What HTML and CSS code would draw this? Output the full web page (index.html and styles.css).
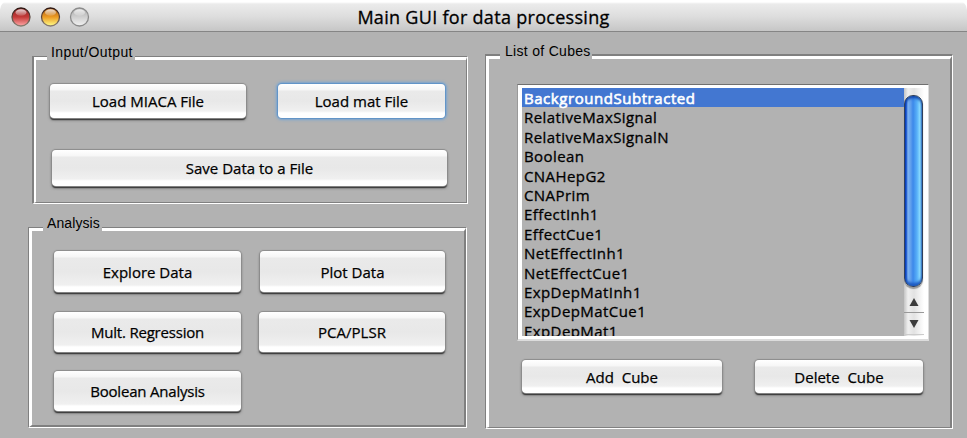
FILE: index.html
```html
<!DOCTYPE html>
<html lang="en">
<head>
<meta charset="utf-8">
<title>Main GUI for data processing</title>
<link rel="stylesheet" href="styles.css">
</head>
<body>
<div class="window">
  <header class="titlebar">
    <svg class="lights" width="90" height="22" viewBox="0 0 90 22">
      <defs>
        <linearGradient id="red" x2="0" y2="1"><stop offset="0" stop-color="#8d2525"/><stop offset=".5" stop-color="#c43a38"/><stop offset="1" stop-color="#ffa8a8"/></linearGradient>
        <linearGradient id="amber" x2="0" y2="1"><stop offset="0" stop-color="#a85a16"/><stop offset=".5" stop-color="#eb9a22"/><stop offset="1" stop-color="#ffff8c"/></linearGradient>
        <linearGradient id="clear" x2="0" y2="1"><stop offset="0" stop-color="#aaa"/><stop offset=".5" stop-color="#cfcfcf"/><stop offset="1" stop-color="#f2f2f2"/></linearGradient>
        <linearGradient id="rim" x2="0" y2="1"><stop offset="0" stop-color="#2c1510"/><stop offset="1" stop-color="#8a7d70"/></linearGradient>
        <linearGradient id="gloss" x2="0" y2="1"><stop offset="0" stop-color="#fff" stop-opacity=".8"/><stop offset="1" stop-color="#fff" stop-opacity=".15"/></linearGradient>
      </defs>
      <g stroke-width="1.3">
        <circle cx="21" cy="11" r="9" fill="url(#red)" stroke="url(#rim)"/>
        <circle cx="50.5" cy="11" r="9" fill="url(#amber)" stroke="url(#rim)"/>
        <circle cx="79.5" cy="11" r="9" fill="url(#clear)" stroke="#8b8b8b"/>
      </g>
      <g fill="url(#gloss)">
        <ellipse cx="21" cy="6.5" rx="5.5" ry="3.2"/>
        <ellipse cx="50.5" cy="6.5" rx="5.5" ry="3.2"/>
        <ellipse cx="79.5" cy="6.5" rx="5.5" ry="3.2"/>
      </g>
    </svg>
    <h1 class="title">Main GUI for data processing</h1>
  </header>
  <main class="content">
    <div class="left">
      <section class="panel io">
        <h2 class="legend">Input/Output</h2>
        <div class="inner io-inner">
          <div class="row">
            <button class="btn load-miaca"><span>Load MIACA File</span></button>
            <button class="btn load-mat focus"><span>Load mat File</span></button>
          </div>
          <button class="btn save"><span>Save Data to a File</span></button>
        </div>
      </section>
      <section class="panel analysis">
        <h2 class="legend">Analysis</h2>
        <div class="inner analysis-inner">
          <button class="btn"><span>Explore Data</span></button>
          <button class="btn plot"><span>Plot Data</span></button>
          <button class="btn lower tight"><span>Mult. Regression</span></button>
          <button class="btn lower pca"><span>PCA/PLSR</span></button>
          <button class="btn last tight"><span>Boolean Analysis</span></button>
        </div>
      </section>
    </div>
    <section class="panel cubes">
      <h2 class="legend">List of Cubes</h2>
      <div class="inner cubes-inner">
        <div class="listbox">
          <ul class="items">
            <li class="selected">BackgroundSubtracted</li>
            <li>RelativeMaxSignal</li>
            <li>RelativeMaxSignalN</li>
            <li>Boolean</li>
            <li>CNAHepG2</li>
            <li>CNAPrim</li>
            <li>EffectInh1</li>
            <li>EffectCue1</li>
            <li>NetEffectInh1</li>
            <li>NetEffectCue1</li>
            <li>ExpDepMatInh1</li>
            <li>ExpDepMatCue1</li>
            <li>ExpDepMat1</li>
          </ul>
          <div class="scrollbar">
            <div class="thumb"></div>
            <div class="arrow"><svg width="10" height="8"><path d="M5 0L9.5 8H.5z"/></svg></div>
            <div class="arrow"><svg width="10" height="8"><path d="M5 8L9.5 0H.5z"/></svg></div>
          </div>
        </div>
        <div class="row actions">
          <button class="btn add"><span>Add&nbsp; Cube</span></button>
          <button class="btn delete"><span>Delete&nbsp; Cube</span></button>
        </div>
      </div>
    </section>
  </main>
</div>
</body>
</html>
```
FILE: styles.css
```css
* { box-sizing: border-box; }
body { margin: 0; background: #fff; font-family: "Open Sans", "Noto Sans", sans-serif; color: #000; }
.window { width: 967px; height: 438px; display: flex; flex-direction: column; overflow: hidden; }
.titlebar { height: 32px; flex: none; padding-top: 3px; position: relative; display: flex; justify-content: center; border-bottom: 1px solid #858585; border-radius: 10px 10px 0 0; background: linear-gradient(#fff 0, #fff 2px, #ebebeb 4px, #dedede 16px, #c6c6c6 31px); }
.lights { position: absolute; left: 0; top: 6px; }
.title { margin: 0; font-size: 18px; line-height: 28px; font-weight: 400; letter-spacing: .3px; -webkit-text-stroke: .3px #000; white-space: nowrap; }
.content { flex: 1; background: #b2b2b2; display: flex; padding-left: 28px; align-items: flex-start; }
.left { width: 457px; flex: none; padding-top: 24px; }
.panel { position: relative; border: 1px solid #808080; border-right-color: #fff; border-bottom-color: #fff; }
.inner { height: 100%; border: 3px solid #fff; border-right: 1px solid #808080; border-bottom: 1px solid #808080; }
.legend { position: absolute; margin: 0; background: #b2b2b2; font: 14px/16px "Liberation Sans", Arial, sans-serif; white-space: nowrap; }
.io { width: 436px; height: 148px; margin-left: 4px; border-left-width: 2px; }
.io .legend { left: 13px; top: -13px; width: 88px; padding-left: 4px; letter-spacing: .4px; }
.io-inner { border-left-width: 2px; padding: 24px 0 0 14px; }
.row { display: flex; }
.analysis { width: 439px; height: 201px; margin-top: 23px; }
.analysis .legend { left: 14px; top: -13px; width: 59px; padding-left: 4px; letter-spacing: .1px; }
.analysis-inner { border-right-width: 2px; border-bottom-width: 2px; padding: 20px 0 0 22px; display: grid; grid-template-columns: 206px 186px; grid-auto-rows: 42px; row-gap: 18px; }
.cubes { width: 468px; height: 375px; margin-top: 22px; border-top-width: 2px; }
.cubes .legend { left: 14px; top: -13px; width: 92px; padding-left: 5px; letter-spacing: .3px; }
.cubes-inner { border-right-width: 2px; padding: 25px 0 0 28px; }
.btn { display: flex; align-items: center; justify-content: center; width: 187px; height: 41px; padding: 0; border: 0; border-radius: 4px; font: 15px/20px "Open Sans", "Noto Sans", sans-serif; color: #000; -webkit-text-stroke: .25px #000; white-space: nowrap; background: linear-gradient(#fff 0, #f6f6f6 6px, #eaeaea 7px, #e8e8e8 50%, #f0f0f0 calc(100% - 7px), #fff calc(100% - 5px)); box-shadow: 0 0 1px 1px #8c8c8c, 0 2px 1px #303030, 0 2px 3px #666; }
.tight { letter-spacing: -.2px; }
.load-miaca { width: 196px; height: 34px; }
.load-mat { width: 167px; height: 34px; margin-left: 32px; }
.focus { box-shadow: 0 0 1px 1px #5f93c8, 0 0 3px 2px #7aa6d2; }
.save { width: 395px; height: 36px; margin: 32px 0 0 2px; }
.plot { width: 185px; }
.lower { height: 40px; margin-top: 1px; }
.last { height: 40px; }
.pca { width: 186px; margin-left: -1px; }
.listbox { width: 412px; height: 257px; border: 1px solid #707070; border-right-color: #dcdcdc; border-left-color: #999; border-bottom: 2px solid #dcdcdc; display: flex; background: #fff; padding: 3px 4px 3px 4px; }
.items { margin: 0; padding: 0; list-style: none; flex: 1; overflow: hidden; background: #b2b2b2; font-size: 15px; letter-spacing: .42px; -webkit-text-stroke: .3px currentColor; }
.items li { height: 19.42px; line-height: 20px; padding-left: 2px; }
.items .selected { background: #4377d1; color: #fff; letter-spacing: .55px; -webkit-text-stroke-width: .6px; }
.scrollbar { width: 20px; flex: none; display: flex; flex-direction: column; padding-top: 7px; background: linear-gradient(90deg, #c4c4c4, #efefef 4px, #e2e2e2 10px, #fff); }
.thumb { width: 19px; height: 192px; flex: none; margin-bottom: 4px; border-radius: 9px; border: 1px solid #30405c; background: linear-gradient(90deg, #0838b4 0, #0c48c8 1px, #7fb4f0 3px, #5c9cec 6px, #3c88ea 8px, #58b0f8 12px, #8cdcff 15px, #3f7ec0 17px); box-shadow: inset 0 3px 3px -1px #0a3fa8, inset 0 -4px 3px -1px #1c58c0, 0 2px 1px #999; }
.arrow { width: 100%; height: 22px; display: flex; justify-content: center; align-items: center; border-bottom: 1px solid #999; fill: #3c3c3c; }
.arrow:last-child { border-bottom-color: #ccc; }
.actions { padding: 19px 0 0 5px; }
.add { width: 200px; height: 33px; }
.delete { width: 168px; height: 33px; margin-left: 33px; }
```
